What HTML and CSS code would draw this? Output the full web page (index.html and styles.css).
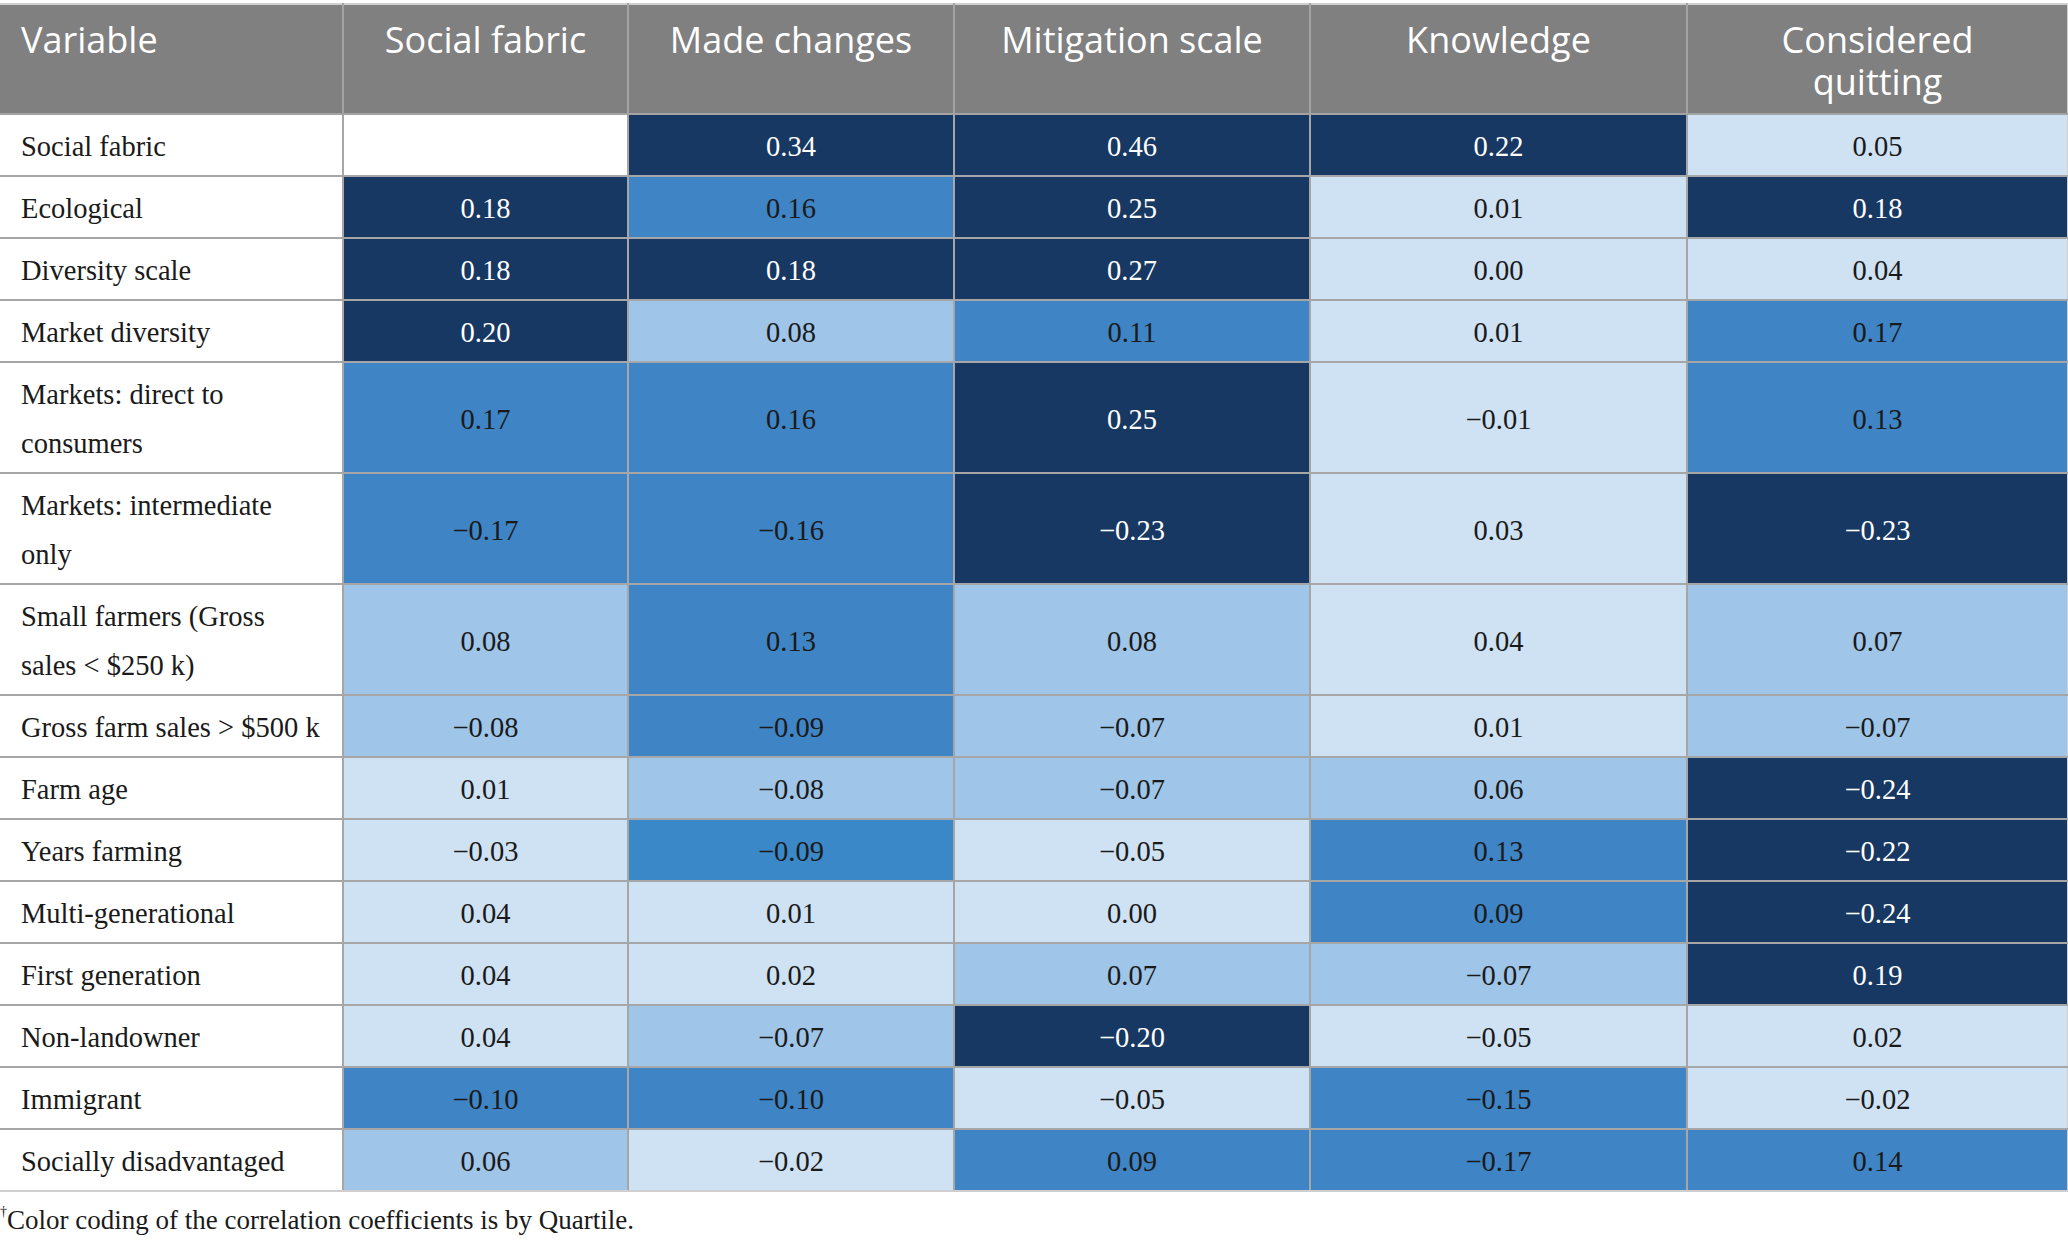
FILE: index.html
```html
<!DOCTYPE html>
<html>
<head>
<meta charset="utf-8">
<link rel="stylesheet" href="styles.css">
</head>
<body>
<div class="wrap">
<table class="corr">
<colgroup>
<col class="c0"><col class="c1"><col class="c2"><col class="c3"><col class="c4"><col class="c5">
</colgroup>
<thead>
<tr>
<th class="first">Variable</th>
<th>Social fabric</th>
<th>Made changes</th>
<th>Mitigation scale</th>
<th>Knowledge</th>
<th><span class="hl">Considered</span><span class="hl">quitting</span></th>
</tr>
</thead>
<tbody>
<tr><td class="lab">Social fabric</td><td class="w"></td><td class="n">0.34</td><td class="n">0.46</td><td class="n">0.22</td><td class="v">0.05</td></tr>
<tr><td class="lab">Ecological</td><td class="n">0.18</td><td class="b">0.16</td><td class="n">0.25</td><td class="v">0.01</td><td class="n">0.18</td></tr>
<tr><td class="lab">Diversity scale</td><td class="n">0.18</td><td class="n">0.18</td><td class="n">0.27</td><td class="v">0.00</td><td class="v">0.04</td></tr>
<tr><td class="lab">Market diversity</td><td class="n">0.20</td><td class="l">0.08</td><td class="b">0.11</td><td class="v">0.01</td><td class="b">0.17</td></tr>
<tr><td class="lab">Markets: direct to<br>consumers</td><td class="b">0.17</td><td class="b">0.16</td><td class="n">0.25</td><td class="v">−0.01</td><td class="b">0.13</td></tr>
<tr><td class="lab">Markets: intermediate<br>only</td><td class="b">−0.17</td><td class="b">−0.16</td><td class="n">−0.23</td><td class="v">0.03</td><td class="n">−0.23</td></tr>
<tr><td class="lab">Small farmers (Gross<br>sales &lt; $250 k)</td><td class="l">0.08</td><td class="b">0.13</td><td class="l">0.08</td><td class="v">0.04</td><td class="l">0.07</td></tr>
<tr><td class="lab">Gross farm sales &gt; $500 k</td><td class="l">−0.08</td><td class="b">−0.09</td><td class="l">−0.07</td><td class="v">0.01</td><td class="l">−0.07</td></tr>
<tr><td class="lab">Farm age</td><td class="v">0.01</td><td class="l">−0.08</td><td class="l">−0.07</td><td class="l">0.06</td><td class="n">−0.24</td></tr>
<tr><td class="lab">Years farming</td><td class="v">−0.03</td><td class="b2">−0.09</td><td class="v">−0.05</td><td class="b">0.13</td><td class="n">−0.22</td></tr>
<tr><td class="lab">Multi-generational</td><td class="v">0.04</td><td class="v">0.01</td><td class="v">0.00</td><td class="b">0.09</td><td class="n">−0.24</td></tr>
<tr><td class="lab">First generation</td><td class="v">0.04</td><td class="v">0.02</td><td class="l">0.07</td><td class="l">−0.07</td><td class="n">0.19</td></tr>
<tr><td class="lab">Non-landowner</td><td class="v">0.04</td><td class="l">−0.07</td><td class="n">−0.20</td><td class="v">−0.05</td><td class="v">0.02</td></tr>
<tr><td class="lab">Immigrant</td><td class="b">−0.10</td><td class="b">−0.10</td><td class="v">−0.05</td><td class="b">−0.15</td><td class="v">−0.02</td></tr>
<tr><td class="lab">Socially disadvantaged</td><td class="l">0.06</td><td class="v">−0.02</td><td class="b">0.09</td><td class="b">−0.17</td><td class="b">0.14</td></tr>
</tbody>
</table>
<p class="note"><sup>†</sup>Color coding of the correlation coefficients is by Quartile.</p>
</div>
</body>
</html>
```
FILE: styles.css
```css
html, body {
  margin: 0;
  padding: 0;
  background: #ffffff;
}
.wrap {
  width: 2068px;
  padding-top: 3px;
}
.corr {
  width: 2068px;
  table-layout: fixed;
  border-collapse: collapse;
  border-top: 2px solid #cfcfcf;
  border-bottom: 2px solid #cfcfcf;
  font-family: "Liberation Serif", "Times New Roman", serif;
}
.c0 { width: 343px; }
.c1 { width: 285px; }
.c2 { width: 326px; }
.c3 { width: 356px; }
.c4 { width: 377px; }
.c5 { width: 381px; }
.corr th {
  background: #808080;
  color: #ffffff;
  font-family: "Open Sans", "Noto Sans", sans-serif;
  font-weight: 400;
  font-size: 36px;
  line-height: 42px;
  text-align: center;
  vertical-align: top;
  padding: 14px 12px 10px;
  border-left: 2px solid #a3a3a3;
  border-right: 2px solid #a3a3a3;
  border-bottom: 2px solid #a3a3a3;
  height: 84px;
}
.corr th .hl {
  display: block;
  height: 42px;
  line-height: 42px;
  overflow: visible;
}
.corr th.first {
  text-align: left;
  padding-left: 21px;
  border-left: none;
}
.corr th:last-child {
  border-right: 2px solid #d0d0d0;
}
.corr td {
  font-size: 28.5px;
  line-height: 49px;
  padding: 7px 10px 4px;
  text-align: center;
  vertical-align: middle;
  color: #1a1a1a;
  border: 2px solid #a6a6a6;
}
.corr td.lab {
  text-align: left;
  padding-left: 21px;
  padding-right: 10px;
  white-space: nowrap;
  border-left: none;
  background: #ffffff;
}
.corr td:last-child {
  border-right: 2px solid #d0d0d0;
}
.corr tbody tr:last-child td {
  border-bottom: 2px solid #cfcfcf;
}
.w { background: #ffffff; }
.n { background: #173862; color: #ffffff !important; }
.b { background: #3f84c5; }
.b2 { background: #3a88c8; }
.l { background: #9fc5e8; }
.v { background: #cfe2f3; }
.note {
  margin: 10px 0 0 0;
  font-family: "Liberation Serif", "Times New Roman", serif;
  font-size: 27px;
  line-height: 36px;
  color: #1a1a1a;
}
.note sup {
  font-size: 14px;
  vertical-align: top;
  line-height: 20px;
}
```
